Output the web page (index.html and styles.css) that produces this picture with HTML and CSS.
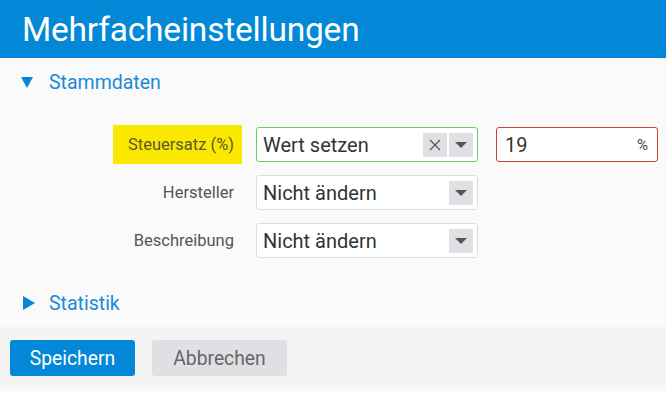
FILE: index.html
```html
<!DOCTYPE html>
<html lang="de">
<head>
  <meta charset="UTF-8" />
  <title>Mehrfacheinstellungen</title>
  <link rel="stylesheet" href="styles.css">
</head>
<body>
  <div class="kopf">
    <h1>Mehrfacheinstellungen</h1>
  </div>

  <div class="inhalt">
    <div class="abschnitt">
      <span class="pfeil"><span class="runter"></span></span> Stammdaten
    </div>

    <div class="felder">
      <div class="zeile">
        <label class="beschriftung markiert">Steuersatz (%)</label>
        <div class="auswahl gruen">
          <span class="wert">Wert setzen</span>
          <span class="knopf">
            <svg width="12" height="12" viewBox="0 0 12 12"><path d="M1 1 L11 11 M11 1 L1 11" stroke="#555" stroke-width="1.2" fill="none"/></svg>
          </span>
          <span class="knopf"><span class="dreieck"></span></span>
        </div>
        <div class="eingabe">
          <span class="zahl">19</span>
          <span class="einheit">%</span>
        </div>
      </div>

      <div class="zeile">
        <label class="beschriftung">Hersteller</label>
        <div class="auswahl">
          <span class="wert">Nicht ändern</span>
          <span class="knopf"><span class="dreieck"></span></span>
        </div>
      </div>

      <div class="zeile">
        <label class="beschriftung">Beschreibung</label>
        <div class="auswahl">
          <span class="wert">Nicht ändern</span>
          <span class="knopf"><span class="dreieck"></span></span>
        </div>
      </div>
    </div>

    <div class="abschnitt zu">
      <span class="pfeil"><span class="rechts"></span></span> Statistik
    </div>
  </div>

  <div class="fuss">
    <button class="btn speichern">Speichern</button>
    <button class="btn abbrechen">Abbrechen</button>
  </div>
</body>
</html>
```

FILE: styles.css
```css
* {
  box-sizing: border-box;
  margin: 0;
  padding: 0;
}

body {
  font-family: Roboto, "Liberation Sans", sans-serif;
  background-color: #fafafa;
  color: #333;
}

.kopf {
  background-color: #0288d6;
  height: 58px;
  padding-left: 22px;
  display: flex;
  align-items: center;
}

.kopf h1 {
  color: #fff;
  font-weight: 400;
  font-size: 33.5px;
  letter-spacing: -0.2px;
}

.inhalt {
  height: 269px;
  padding-top: 12px;
}

.abschnitt {
  color: #1b8ad8;
  font-size: 19.5px;
  padding-left: 21px;
  height: 24px;
  display: flex;
  align-items: center;
}

.pfeil {
  width: 28px;
  display: flex;
  align-items: center;
}

.runter {
  width: 0;
  height: 0;
  border-left: 6.5px solid transparent;
  border-right: 6.5px solid transparent;
  border-top: 11px solid #0a84d6;
}

.rechts {
  width: 0;
  height: 0;
  margin-left: 2px;
  border-top: 7px solid transparent;
  border-bottom: 7px solid transparent;
  border-left: 12px solid #0a84d6;
}

.abschnitt.zu {
  margin-top: 33px;
}

.felder {
  padding-top: 33px;
  display: flex;
  flex-direction: column;
  gap: 13px;
}

.zeile {
  display: flex;
  align-items: center;
  height: 35px;
}

.beschriftung {
  width: 242px;
  padding-right: 8px;
  text-align: right;
  font-size: 16.5px;
  color: #555;
}

.beschriftung.markiert {
  background-color: #fbe800;
  width: 129px;
  margin: -2px 0 -2px 113px;
  height: 39px;
  line-height: 39px;
  color: #5a5a2a;
}

.auswahl {
  margin-left: 14px;
  width: 222px;
  height: 35px;
  border: 1px solid #ddd;
  border-radius: 3px;
  background-color: #fff;
  display: flex;
  align-items: center;
  padding: 0 4px 0 6px;
  gap: 2px;
}

.auswahl.gruen {
  border-color: #6cc96c;
}

.wert {
  flex: 1;
  font-size: 20px;
  color: #333;
}

.knopf {
  width: 24px;
  height: 24px;
  background-color: #e0e0e4;
  display: flex;
  align-items: center;
  justify-content: center;
}

.dreieck {
  width: 0;
  height: 0;
  border-left: 6px solid transparent;
  border-right: 6px solid transparent;
  border-top: 6px solid #555;
}

.eingabe {
  margin-left: 18px;
  width: 162px;
  height: 35px;
  border: 1px solid #c84040;
  border-radius: 3px;
  background-color: #fff;
  display: flex;
  align-items: center;
  justify-content: space-between;
  padding: 0 9px 0 8px;
}

.zahl {
  font-size: 20px;
  color: #333;
}

.einheit {
  font-size: 15px;
  color: #444;
}

.fuss {
  background-color: #f4f4f5;
  height: 60px;
  padding: 13px 10px 0;
  display: flex;
  gap: 17px;
  align-items: flex-start;
}

.btn {
  font-family: Roboto, "Liberation Sans", sans-serif;
  font-size: 19.3px;
  height: 36px;
  border: none;
  border-radius: 3px;
  padding: 0;
}

.speichern {
  background-color: #0288d6;
  color: #fff;
  width: 125px;
}

.abbrechen {
  background-color: #e0e0e4;
  color: #666;
  width: 135px;
}
```
